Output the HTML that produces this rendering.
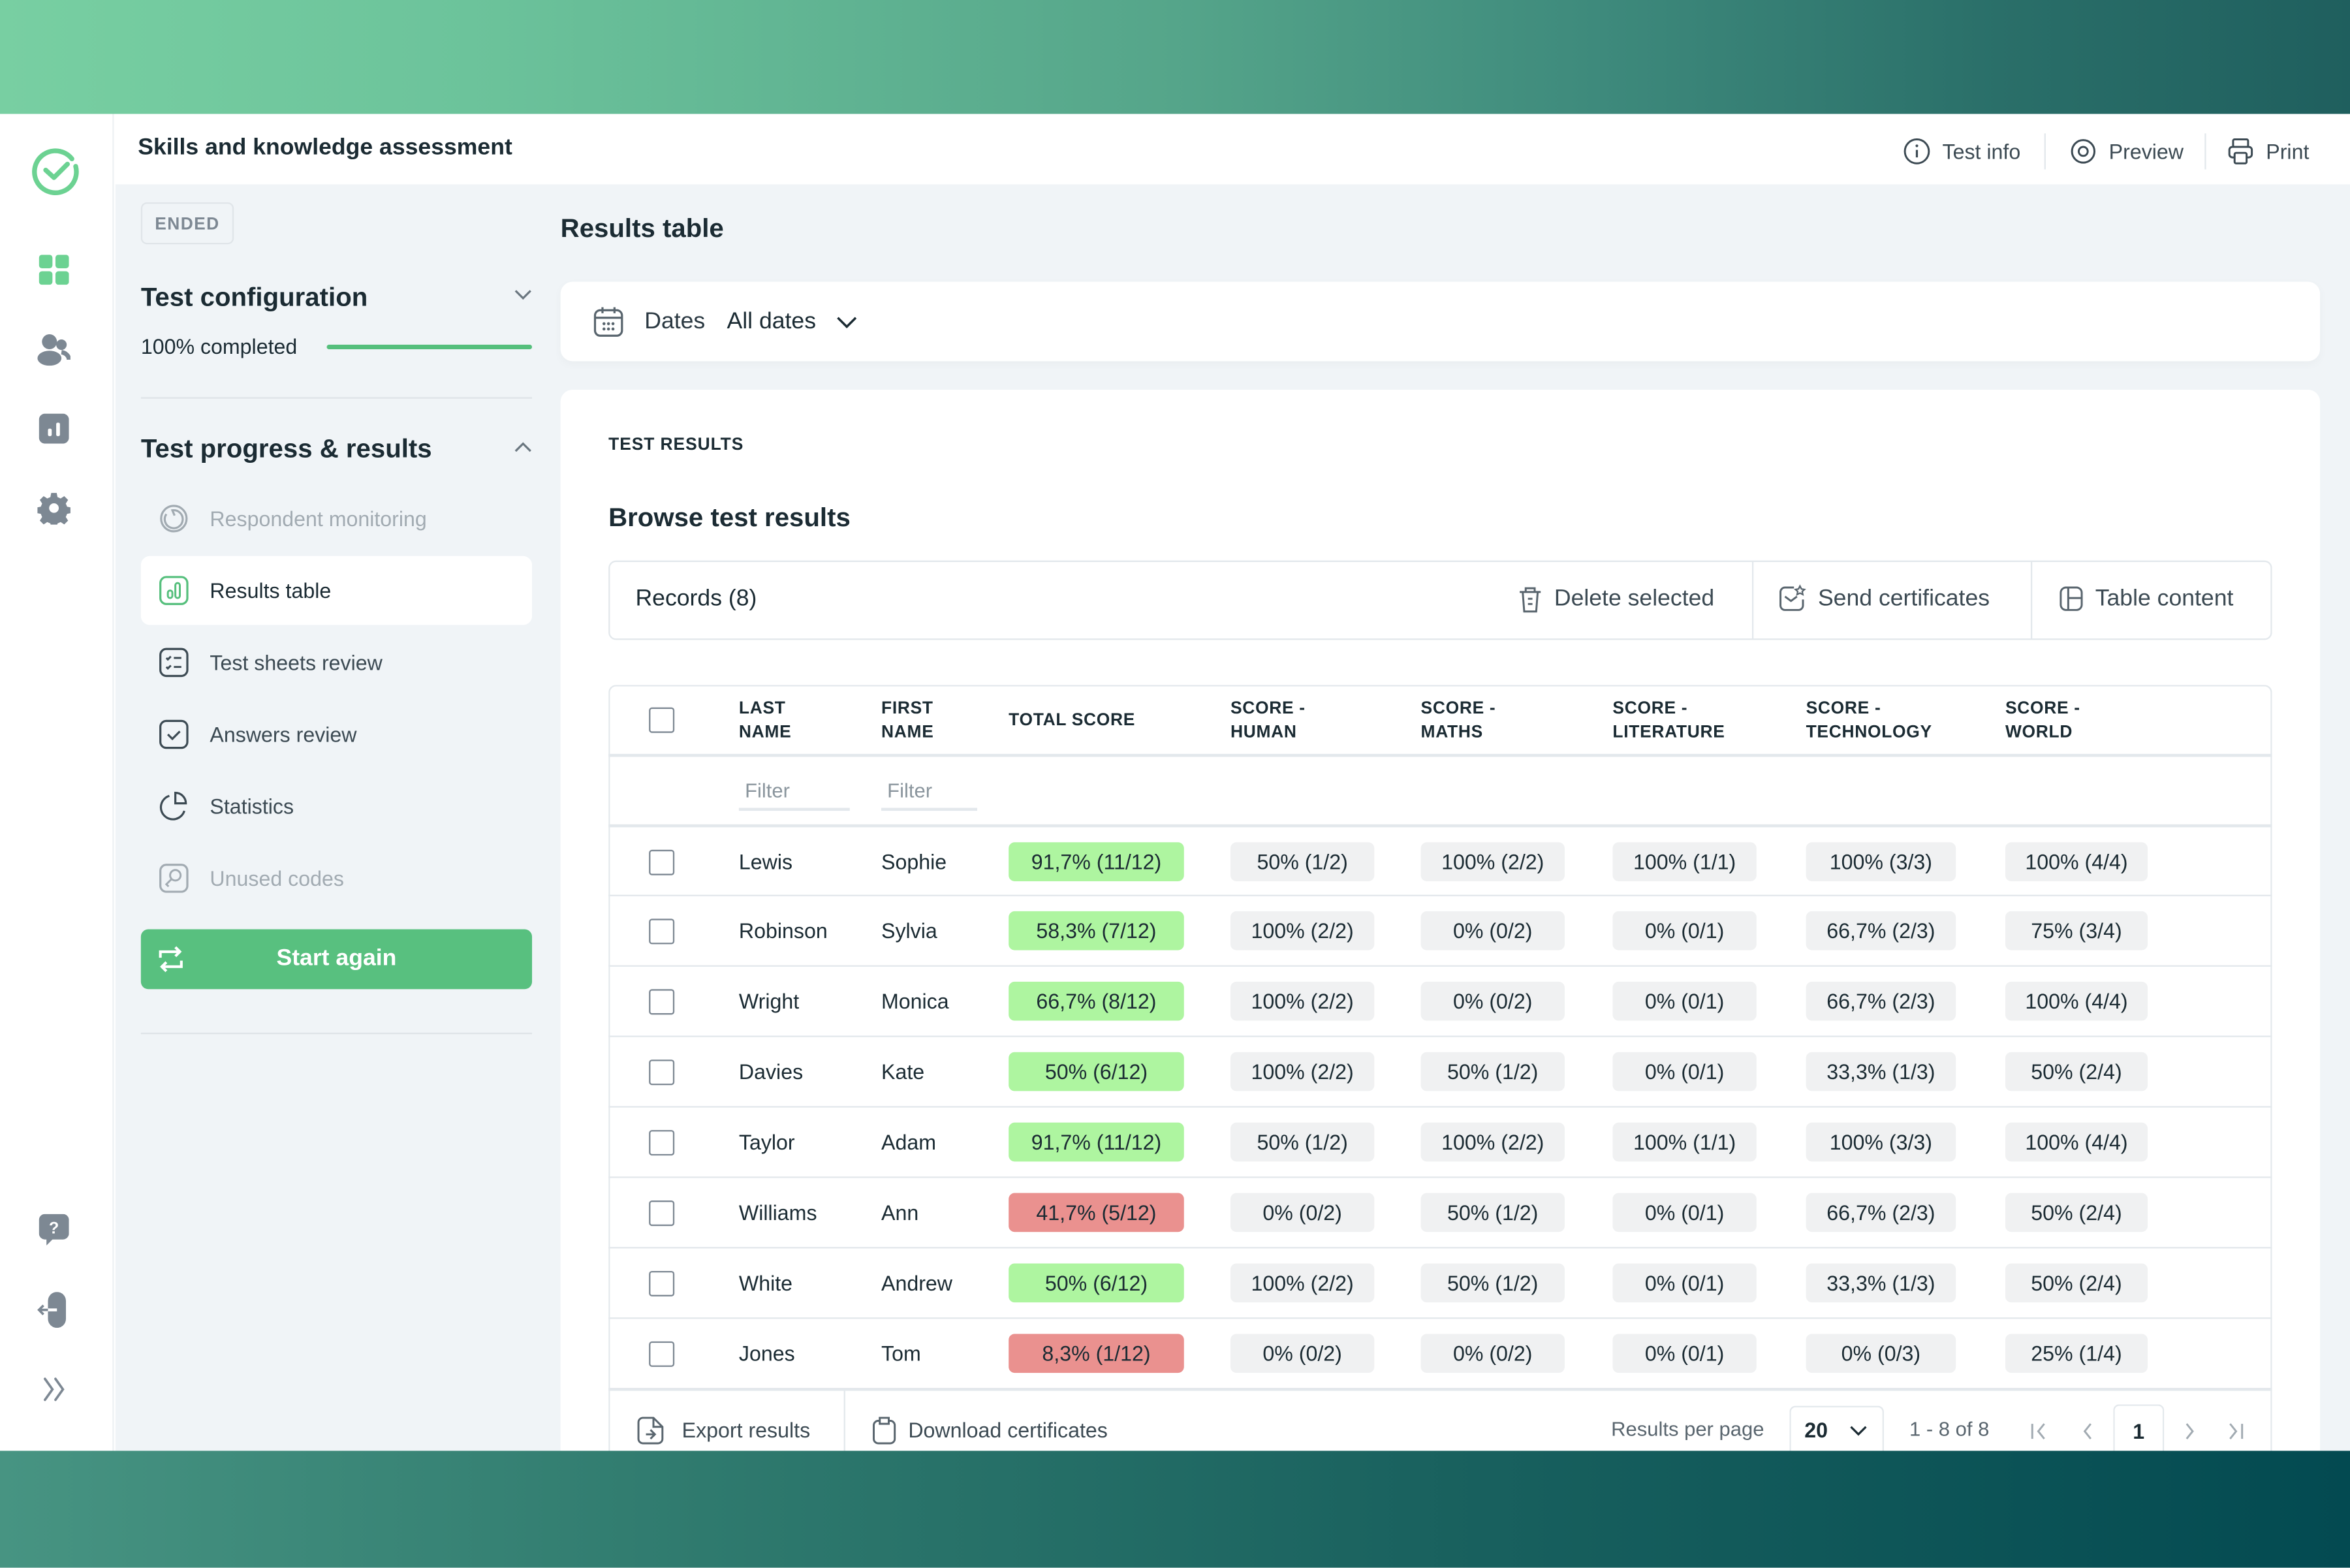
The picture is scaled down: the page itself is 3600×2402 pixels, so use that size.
<!DOCTYPE html>
<html><head><meta charset="utf-8">
<style>
*{box-sizing:border-box;margin:0;padding:0}
html,body{width:3600px;height:2400px;overflow:hidden;background:#fff}
#w{position:absolute;left:0;top:0;width:1568px;height:1046px;transform:scale(2.29592);transform-origin:0 0;font-family:"Liberation Sans",sans-serif;color:#1b2b33}
.a{position:absolute}
.top{left:0;top:0;width:1568px;height:76px;background:linear-gradient(90deg,#78cfa2 0%,#6cc39b 20%,#55a58a 50%,#3e8a7c 68%,#2a6f69 85%,#1f5f5e 100%)}
.bot{left:0;top:968px;width:1568px;height:78px;background:linear-gradient(90deg,#479482 0%,#2f7a6e 30%,#1a625f 60%,#034a51 100%)}
.rail{left:0;top:76px;width:76px;height:892px;background:#fff;border-right:1px solid #eef1f3}
.hdr{left:76px;top:76px;width:1492px;height:47px;background:#fff}
.gray{left:77px;top:123px;width:1491px;height:845px;background:#f0f4f7}
.card{background:#fff;border-radius:8px}
.nav{left:94px;width:261px;height:46px;display:flex;align-items:center;padding-left:12px;font-size:14px;color:#3c4a53}
.nav svg{margin-right:14px}
.th{font-size:11.5px;font-weight:bold;letter-spacing:.3px;line-height:16px;color:#1b2b33}
.row{left:406px;width:1110px;height:47px;border-top:1px solid #e3e8ec}
.cb{position:absolute;left:27px;top:15px;width:17px;height:17px;border:1.6px solid #7d8893;border-radius:2px}
.cell{position:absolute;top:0;line-height:46px;font-size:14px}
.b{position:absolute;top:10px;height:26px;line-height:26px;text-align:center;font-size:14px;border-radius:4px;background:#f0f1f2;color:#1b2b33}
.g{background:#aef5a0}.r{background:#ea918f}
</style></head><body><div id="w">
<div class="a top"></div>
<div class="a rail"></div>
<div class="a hdr"></div>
<div class="a gray"></div>

<!-- rail icons -->
<svg class="a" style="left:20px;top:97px" width="34" height="34" viewBox="0 0 34 34"><path d="M28 9A14 14 0 1 0 30.5 14" fill="none" stroke="#6cd292" stroke-width="3.2" stroke-linecap="round"/><path d="M10.5 16.5l5.5 5 9-9" fill="none" stroke="#6cd292" stroke-width="3.2" stroke-linecap="round" stroke-linejoin="round"/></svg>
<svg class="a" style="left:26px;top:170px" width="20" height="20"><rect x="0" y="0" width="9" height="9" rx="2" fill="#6cd292"/><rect x="11" y="0" width="9" height="9" rx="2" fill="#6cd292"/><rect x="0" y="11" width="9" height="9" rx="2" fill="#6cd292"/><rect x="11" y="11" width="9" height="9" rx="2" fill="#6cd292"/></svg>
<svg class="a" style="left:25px;top:222px" width="22" height="22"><circle cx="8" cy="6" r="5" fill="#7d8893"/><ellipse cx="8" cy="17" rx="8" ry="5" fill="#7d8893"/><circle cx="16" cy="8" r="3.5" fill="#7d8893"/><path d="M16 13a6 5 0 0 1 5 5" fill="none" stroke="#7d8893" stroke-width="3"/></svg>
<svg class="a" style="left:26px;top:276px" width="20" height="20"><rect width="20" height="20" rx="4" fill="#7d8893"/><rect x="6" y="10" width="2.5" height="5" rx="1" fill="#fff"/><rect x="11.5" y="6" width="2.5" height="9" rx="1" fill="#fff"/></svg>
<svg class="a" style="left:25px;top:328px" width="22" height="22" viewBox="0 0 24 24"><path fill="#7d8893" fill-rule="evenodd" d="M10 1h4l.6 3 2.3 1 2.6-1.7 2.8 2.8-1.7 2.6 1 2.3 3 .6v4l-3 .6-1 2.3 1.7 2.6-2.8 2.8-2.6-1.7-2.3 1-.6 3h-4l-.6-3-2.3-1-2.6 1.7-2.8-2.8 1.7-2.6-1-2.3-3-.6v-4l3-.6 1-2.3-1.7-2.6 2.8-2.8 2.6 1.7 2.3-1zM12 8.5a3.5 3.5 0 1 0 0 7 3.5 3.5 0 0 0 0-7z"/></svg>
<svg class="a" style="left:26px;top:810px" width="20" height="22"><rect width="20" height="17" rx="4" fill="#7d8893"/><path d="M5 16l0 5 5-5z" fill="#7d8893"/><text x="10" y="13" font-size="11" font-weight="bold" fill="#fff" text-anchor="middle" font-family="Liberation Sans">?</text></svg>
<svg class="a" style="left:24px;top:862px" width="22" height="24"><rect x="8" y="0" width="12" height="24" rx="6" fill="#7d8893"/><path d="M2 12h12" stroke="#fff" stroke-width="2"/><path d="M2 12h6M5 9l-3 3 3 3" fill="none" stroke="#7d8893" stroke-width="1.6"/></svg>
<svg class="a" style="left:28px;top:919px" width="18" height="16"><path d="M2 1l5 7-5 7M9 1l5 7-5 7" fill="none" stroke="#7d8893" stroke-width="1.6" stroke-linecap="round"/></svg>

<!-- header -->
<div class="a" style="left:92px;top:90px;font-size:15.5px;font-weight:bold;color:#1b2b33">Skills and knowledge assessment</div>
<div class="a" style="left:1270px;top:89px;display:flex;align-items:center;font-size:14px;color:#3c4a53">
<svg width="18" height="18" style="margin-right:8px"><circle cx="9" cy="9" r="8" fill="none" stroke="#3c4a53" stroke-width="1.3"/><path d="M9 8v5" stroke="#3c4a53" stroke-width="1.4"/><circle cx="9" cy="5.3" r=".9" fill="#3c4a53"/></svg>Test info
<div style="width:1px;height:24px;background:#e3e8ec;margin:0 16px"></div>
<svg width="18" height="18" style="margin-right:8px"><circle cx="9" cy="9" r="7.5" fill="none" stroke="#3c4a53" stroke-width="1.3"/><circle cx="9" cy="9" r="3" fill="none" stroke="#3c4a53" stroke-width="1.3"/></svg>Preview
<div style="width:1px;height:24px;background:#e3e8ec;margin:0 14px"></div>
<svg width="18" height="18" style="margin-right:8px"><rect x="4" y="1" width="10" height="5" rx="1" fill="none" stroke="#3c4a53" stroke-width="1.3"/><rect x="1.5" y="6" width="15" height="7" rx="2" fill="none" stroke="#3c4a53" stroke-width="1.3"/><rect x="5" y="10" width="8" height="7" rx="1" fill="#fff" stroke="#3c4a53" stroke-width="1.3"/></svg>Print
</div>

<!-- sidebar -->
<div class="a" style="left:94px;top:135px;width:62px;height:28px;border:1px solid #e0e5e9;border-radius:4px;font-size:11.5px;font-weight:bold;color:#7d8893;text-align:center;line-height:28px;letter-spacing:.6px">ENDED</div>
<div class="a" style="left:94px;top:188px;font-size:17.5px;font-weight:bold">Test configuration</div>
<svg class="a" style="left:343px;top:192px" width="12" height="10"><path d="M1 2l5 5 5-5" fill="none" stroke="#6b7780" stroke-width="1.4"/></svg>
<div class="a" style="left:94px;top:223px;font-size:14px">100% completed</div>
<div class="a" style="left:218px;top:230px;width:137px;height:3px;border-radius:2px;background:#55bf7c"></div>
<div class="a" style="left:94px;top:265px;width:261px;height:1px;background:#dfe4e8"></div>
<div class="a" style="left:94px;top:289px;font-size:17.5px;font-weight:bold">Test progress &amp; results</div>
<svg class="a" style="left:343px;top:293px" width="12" height="10"><path d="M1 8l5-5 5 5" fill="none" stroke="#6b7780" stroke-width="1.4"/></svg>

<div class="a nav" style="top:323px;color:#a2abb2"><svg width="20" height="20"><circle cx="10" cy="10" r="8.5" fill="none" stroke="#a2abb2" stroke-width="1.4"/><path d="M5 7a6 6 0 1 0 4-2.5l1.5 3.5" fill="none" stroke="#a2abb2" stroke-width="1.4"/></svg>Respondent monitoring</div>
<div class="a nav card" style="top:371px;background:#fff;border-radius:6px;color:#1b2b33"><svg width="20" height="20"><rect x="1" y="1" width="18" height="18" rx="4" fill="none" stroke="#55bf7c" stroke-width="1.4"/><rect x="6" y="10" width="3" height="5" rx="1.5" fill="none" stroke="#55bf7c" stroke-width="1.3"/><rect x="11" y="5" width="3" height="10" rx="1.5" fill="none" stroke="#55bf7c" stroke-width="1.3"/></svg>Results table</div>
<div class="a nav" style="top:419px"><svg width="20" height="20"><rect x="1" y="1" width="18" height="18" rx="4" fill="none" stroke="#3c4a53" stroke-width="1.4"/><path d="M5 7l1 1 2-2M5 13l1 1 2-2M10 7h5M10 13h5" fill="none" stroke="#3c4a53" stroke-width="1.3"/></svg>Test sheets review</div>
<div class="a nav" style="top:467px"><svg width="20" height="20"><rect x="1" y="1" width="18" height="18" rx="4" fill="none" stroke="#3c4a53" stroke-width="1.4"/><path d="M6 10l3 3 5-5" fill="none" stroke="#3c4a53" stroke-width="1.4"/></svg>Answers review</div>
<div class="a nav" style="top:515px"><svg width="20" height="20"><path d="M7 3a8 8 0 1 0 10 10" fill="none" stroke="#3c4a53" stroke-width="1.4"/><path d="M11 1a7 7 0 0 1 7 7h-7z" fill="none" stroke="#3c4a53" stroke-width="1.4"/></svg>Statistics</div>
<div class="a nav" style="top:563px;color:#a2abb2"><svg width="20" height="20"><rect x="1" y="1" width="18" height="18" rx="4" fill="none" stroke="#a2abb2" stroke-width="1.4"/><circle cx="11" cy="8" r="3.5" fill="none" stroke="#a2abb2" stroke-width="1.3"/><path d="M8.5 10.5l-3.5 3.5 1.5 1.5" fill="none" stroke="#a2abb2" stroke-width="1.3"/></svg>Unused codes</div>
<div class="a" style="left:94px;top:620px;width:261px;height:40px;border-radius:5px;background:#58c07f;color:#fff;font-size:15.5px;font-weight:bold;text-align:center;line-height:40px">Start again</div>
<svg class="a" style="left:104px;top:630px" width="20" height="20"><path d="M3 9V5h13M13 2l3 3-3 3M17 11v4H4M7 12l-3 3 3 3" fill="none" stroke="#fff" stroke-width="1.8"/></svg>
<div class="a" style="left:94px;top:689px;width:261px;height:1px;background:#dfe4e8"></div>

<!-- main -->
<div class="a" style="left:374px;top:142px;font-size:17.5px;font-weight:bold">Results table</div>
<div class="a card" style="left:374px;top:188px;width:1174px;height:53px;box-shadow:0 2px 6px rgba(0,0,0,.03)"></div>
<svg class="a" style="left:396px;top:204px" width="20" height="21"><rect x="1" y="3" width="18" height="17" rx="3.5" fill="none" stroke="#59656e" stroke-width="1.4"/><path d="M1 8h18M6 1v4M14 1v4" stroke="#59656e" stroke-width="1.4"/><g fill="#59656e"><circle cx="7" cy="12" r="1"/><circle cx="10" cy="12" r="1"/><circle cx="13" cy="12" r="1"/><circle cx="7" cy="15.5" r="1"/><circle cx="10" cy="15.5" r="1"/><circle cx="13" cy="15.5" r="1"/></g></svg>
<div class="a" style="left:430px;top:206px;font-size:15.5px;color:#2b3942">Dates</div>
<div class="a" style="left:485px;top:206px;font-size:15.5px">All dates</div>
<svg class="a" style="left:558px;top:210px" width="14" height="10"><path d="M1 2l6 6 6-6" fill="none" stroke="#1b2b33" stroke-width="1.5"/></svg>

<div class="a card" style="left:374px;top:260px;width:1174px;height:720px"></div>
<div class="a" style="left:406px;top:291px;font-size:11.5px;font-weight:bold;letter-spacing:.4px">TEST RESULTS</div>
<div class="a" style="left:406px;top:335px;font-size:17.5px;font-weight:bold">Browse test results</div>
<div class="a" style="left:406px;top:374px;width:1110px;height:53px;border:1px solid #e3e8ec;border-radius:5px"></div>
<div class="a" style="left:424px;top:391px;font-size:15.5px">Records (8)</div>
<div class="a" style="left:1169px;top:375px;width:1px;height:51px;background:#e3e8ec"></div>
<div class="a" style="left:1355px;top:375px;width:1px;height:51px;background:#e3e8ec"></div>
<svg class="a" style="left:1013px;top:391px" width="16" height="18"><path d="M1 4h14M5 4V1.5h6V4M3 4l1 13h8l1-13M6.5 8.5h3M6.5 12h3" fill="none" stroke="#59656e" stroke-width="1.3"/></svg>
<div class="a" style="left:1037px;top:391px;font-size:15.5px;color:#3c4a53">Delete selected</div>
<svg class="a" style="left:1187px;top:390px" width="18" height="18"><path d="M10 2H4a3 3 0 0 0-3 3v9a3 3 0 0 0 3 3h9a3 3 0 0 0 3-3V10M4 8l4 3 4-3" fill="none" stroke="#59656e" stroke-width="1.3"/><path d="M14 1l1 2 2 .3-1.5 1.4.4 2-1.9-1-1.9 1 .4-2-1.5-1.4 2-.3z" fill="none" stroke="#59656e" stroke-width="1"/></svg>
<div class="a" style="left:1213px;top:391px;font-size:15.5px;color:#3c4a53">Send certificates</div>
<svg class="a" style="left:1374px;top:391px" width="16" height="17"><rect x="1" y="1" width="14" height="15" rx="3.5" fill="none" stroke="#59656e" stroke-width="1.3"/><path d="M6 1v15M6 8h9" stroke="#59656e" stroke-width="1.3"/></svg>
<div class="a" style="left:1398px;top:391px;font-size:15.5px;color:#3c4a53">Table content</div>

<!-- table -->
<div class="a" style="left:406px;top:457px;width:1110px;height:520px;border:1px solid #e3e8ec;border-radius:5px 5px 0 0;border-bottom:none"></div>
<div class="a" style="left:406px;top:457px;width:1110px;height:47px">
<div class="cb" style="top:15px"></div>
<div class="a th" style="left:87px;top:8px">LAST<br>NAME</div>
<div class="a th" style="left:182px;top:8px">FIRST<br>NAME</div>
<div class="a th" style="left:267px;top:16px">TOTAL SCORE</div>
<div class="a th" style="left:415px;top:8px">SCORE -<br>HUMAN</div>
<div class="a th" style="left:542px;top:8px">SCORE -<br>MATHS</div>
<div class="a th" style="left:670px;top:8px">SCORE -<br>LITERATURE</div>
<div class="a th" style="left:799px;top:8px">SCORE -<br>TECHNOLOGY</div>
<div class="a th" style="left:932px;top:8px">SCORE -<br>WORLD</div>
</div>
<div class="a row" style="top:503px;border-top:2px solid #e3e8ec">
<div class="a" style="left:87px;top:15px;width:74px;height:21px;border-bottom:2px solid #e3e8ec;font-size:13.5px;color:#8a959d;padding-left:4px">Filter</div>
<div class="a" style="left:182px;top:15px;width:64px;height:21px;border-bottom:2px solid #e3e8ec;font-size:13.5px;color:#8a959d;padding-left:4px">Filter</div>
</div>

<div class="a row" style="top:550px;border-top:2px solid #e3e8ec"><div class="cb"></div><div class="cell" style="left:87px">Lewis</div><div class="cell" style="left:182px">Sophie</div><div class="b g" style="left:267px;width:117px">91,7% (11/12)</div><div class="b" style="left:415px;width:96px">50% (1/2)</div><div class="b" style="left:542px;width:96px">100% (2/2)</div><div class="b" style="left:670px;width:96px">100% (1/1)</div><div class="b" style="left:799px;width:100px">100% (3/3)</div><div class="b" style="left:932px;width:95px">100% (4/4)</div></div>
<div class="a row" style="top:597px"><div class="cb"></div><div class="cell" style="left:87px">Robinson</div><div class="cell" style="left:182px">Sylvia</div><div class="b g" style="left:267px;width:117px">58,3% (7/12)</div><div class="b" style="left:415px;width:96px">100% (2/2)</div><div class="b" style="left:542px;width:96px">0% (0/2)</div><div class="b" style="left:670px;width:96px">0% (0/1)</div><div class="b" style="left:799px;width:100px">66,7% (2/3)</div><div class="b" style="left:932px;width:95px">75% (3/4)</div></div>
<div class="a row" style="top:644px"><div class="cb"></div><div class="cell" style="left:87px">Wright</div><div class="cell" style="left:182px">Monica</div><div class="b g" style="left:267px;width:117px">66,7% (8/12)</div><div class="b" style="left:415px;width:96px">100% (2/2)</div><div class="b" style="left:542px;width:96px">0% (0/2)</div><div class="b" style="left:670px;width:96px">0% (0/1)</div><div class="b" style="left:799px;width:100px">66,7% (2/3)</div><div class="b" style="left:932px;width:95px">100% (4/4)</div></div>
<div class="a row" style="top:691px"><div class="cb"></div><div class="cell" style="left:87px">Davies</div><div class="cell" style="left:182px">Kate</div><div class="b g" style="left:267px;width:117px">50% (6/12)</div><div class="b" style="left:415px;width:96px">100% (2/2)</div><div class="b" style="left:542px;width:96px">50% (1/2)</div><div class="b" style="left:670px;width:96px">0% (0/1)</div><div class="b" style="left:799px;width:100px">33,3% (1/3)</div><div class="b" style="left:932px;width:95px">50% (2/4)</div></div>
<div class="a row" style="top:738px"><div class="cb"></div><div class="cell" style="left:87px">Taylor</div><div class="cell" style="left:182px">Adam</div><div class="b g" style="left:267px;width:117px">91,7% (11/12)</div><div class="b" style="left:415px;width:96px">50% (1/2)</div><div class="b" style="left:542px;width:96px">100% (2/2)</div><div class="b" style="left:670px;width:96px">100% (1/1)</div><div class="b" style="left:799px;width:100px">100% (3/3)</div><div class="b" style="left:932px;width:95px">100% (4/4)</div></div>
<div class="a row" style="top:785px"><div class="cb"></div><div class="cell" style="left:87px">Williams</div><div class="cell" style="left:182px">Ann</div><div class="b r" style="left:267px;width:117px">41,7% (5/12)</div><div class="b" style="left:415px;width:96px">0% (0/2)</div><div class="b" style="left:542px;width:96px">50% (1/2)</div><div class="b" style="left:670px;width:96px">0% (0/1)</div><div class="b" style="left:799px;width:100px">66,7% (2/3)</div><div class="b" style="left:932px;width:95px">50% (2/4)</div></div>
<div class="a row" style="top:832px"><div class="cb"></div><div class="cell" style="left:87px">White</div><div class="cell" style="left:182px">Andrew</div><div class="b g" style="left:267px;width:117px">50% (6/12)</div><div class="b" style="left:415px;width:96px">100% (2/2)</div><div class="b" style="left:542px;width:96px">50% (1/2)</div><div class="b" style="left:670px;width:96px">0% (0/1)</div><div class="b" style="left:799px;width:100px">33,3% (1/3)</div><div class="b" style="left:932px;width:95px">50% (2/4)</div></div>
<div class="a row" style="top:879px"><div class="cb"></div><div class="cell" style="left:87px">Jones</div><div class="cell" style="left:182px">Tom</div><div class="b r" style="left:267px;width:117px">8,3% (1/12)</div><div class="b" style="left:415px;width:96px">0% (0/2)</div><div class="b" style="left:542px;width:96px">0% (0/2)</div><div class="b" style="left:670px;width:96px">0% (0/1)</div><div class="b" style="left:799px;width:100px">0% (0/3)</div><div class="b" style="left:932px;width:95px">25% (1/4)</div></div>
<div class="a" style="left:406px;top:926px;width:1110px;height:2px;background:#e3e8ec"></div>

<!-- footer -->
<div class="a" style="left:563px;top:928px;width:1px;height:40px;background:#e3e8ec"></div>
<svg class="a" style="left:425px;top:945px" width="18" height="19"><path d="M11 1H4a3 3 0 0 0-3 3v11a3 3 0 0 0 3 3h10a3 3 0 0 0 3-3V7zM11 1v6h6M6 12h6M9 9l3 3-3 3" fill="none" stroke="#59656e" stroke-width="1.3"/></svg>
<div class="a" style="left:455px;top:946px;font-size:14px;color:#3c4a53">Export results</div>
<svg class="a" style="left:581px;top:945px" width="18" height="19"><path d="M12 3h1a3 3 0 0 1 3 3v9a3 3 0 0 1-3 3H5a3 3 0 0 1-3-3V6a3 3 0 0 1 3-3h1M6 1h6v4H6z" fill="none" stroke="#59656e" stroke-width="1.3"/></svg>
<div class="a" style="left:606px;top:946px;font-size:14px;color:#3c4a53">Download certificates</div>
<div class="a" style="left:1075px;top:946px;font-size:13.5px;color:#59656e">Results per page</div>
<div class="a" style="left:1194px;top:938px;width:63px;height:32px;border:1px solid #e3e8ec;border-radius:4px 4px 0 0;border-bottom:none"></div>
<div class="a" style="left:1204px;top:946px;font-size:14px;font-weight:bold">20</div>
<svg class="a" style="left:1234px;top:951px" width="12" height="8"><path d="M1 1l5 5 5-5" fill="none" stroke="#1b2b33" stroke-width="1.4"/></svg>
<div class="a" style="left:1274px;top:946px;font-size:13.5px;color:#59656e">1 - 8 of 8</div>
<svg class="a" style="left:1355px;top:948px" width="150" height="14"><path d="M1 2v10M9 2l-4 5 4 5M40 2l-4 5 4 5M104 2l4 5-4 5M133 2l4 5-4 5M141 2v10" fill="none" stroke="#a2abb2" stroke-width="1.3"/></svg>
<div class="a" style="left:1410px;top:937px;width:34px;height:33px;border:1px solid #e3e8ec;border-radius:4px 4px 0 0;border-bottom:none;text-align:center;font-size:14px;font-weight:bold;line-height:34px">1</div>
<div class="a bot"></div>
</div></body></html>
